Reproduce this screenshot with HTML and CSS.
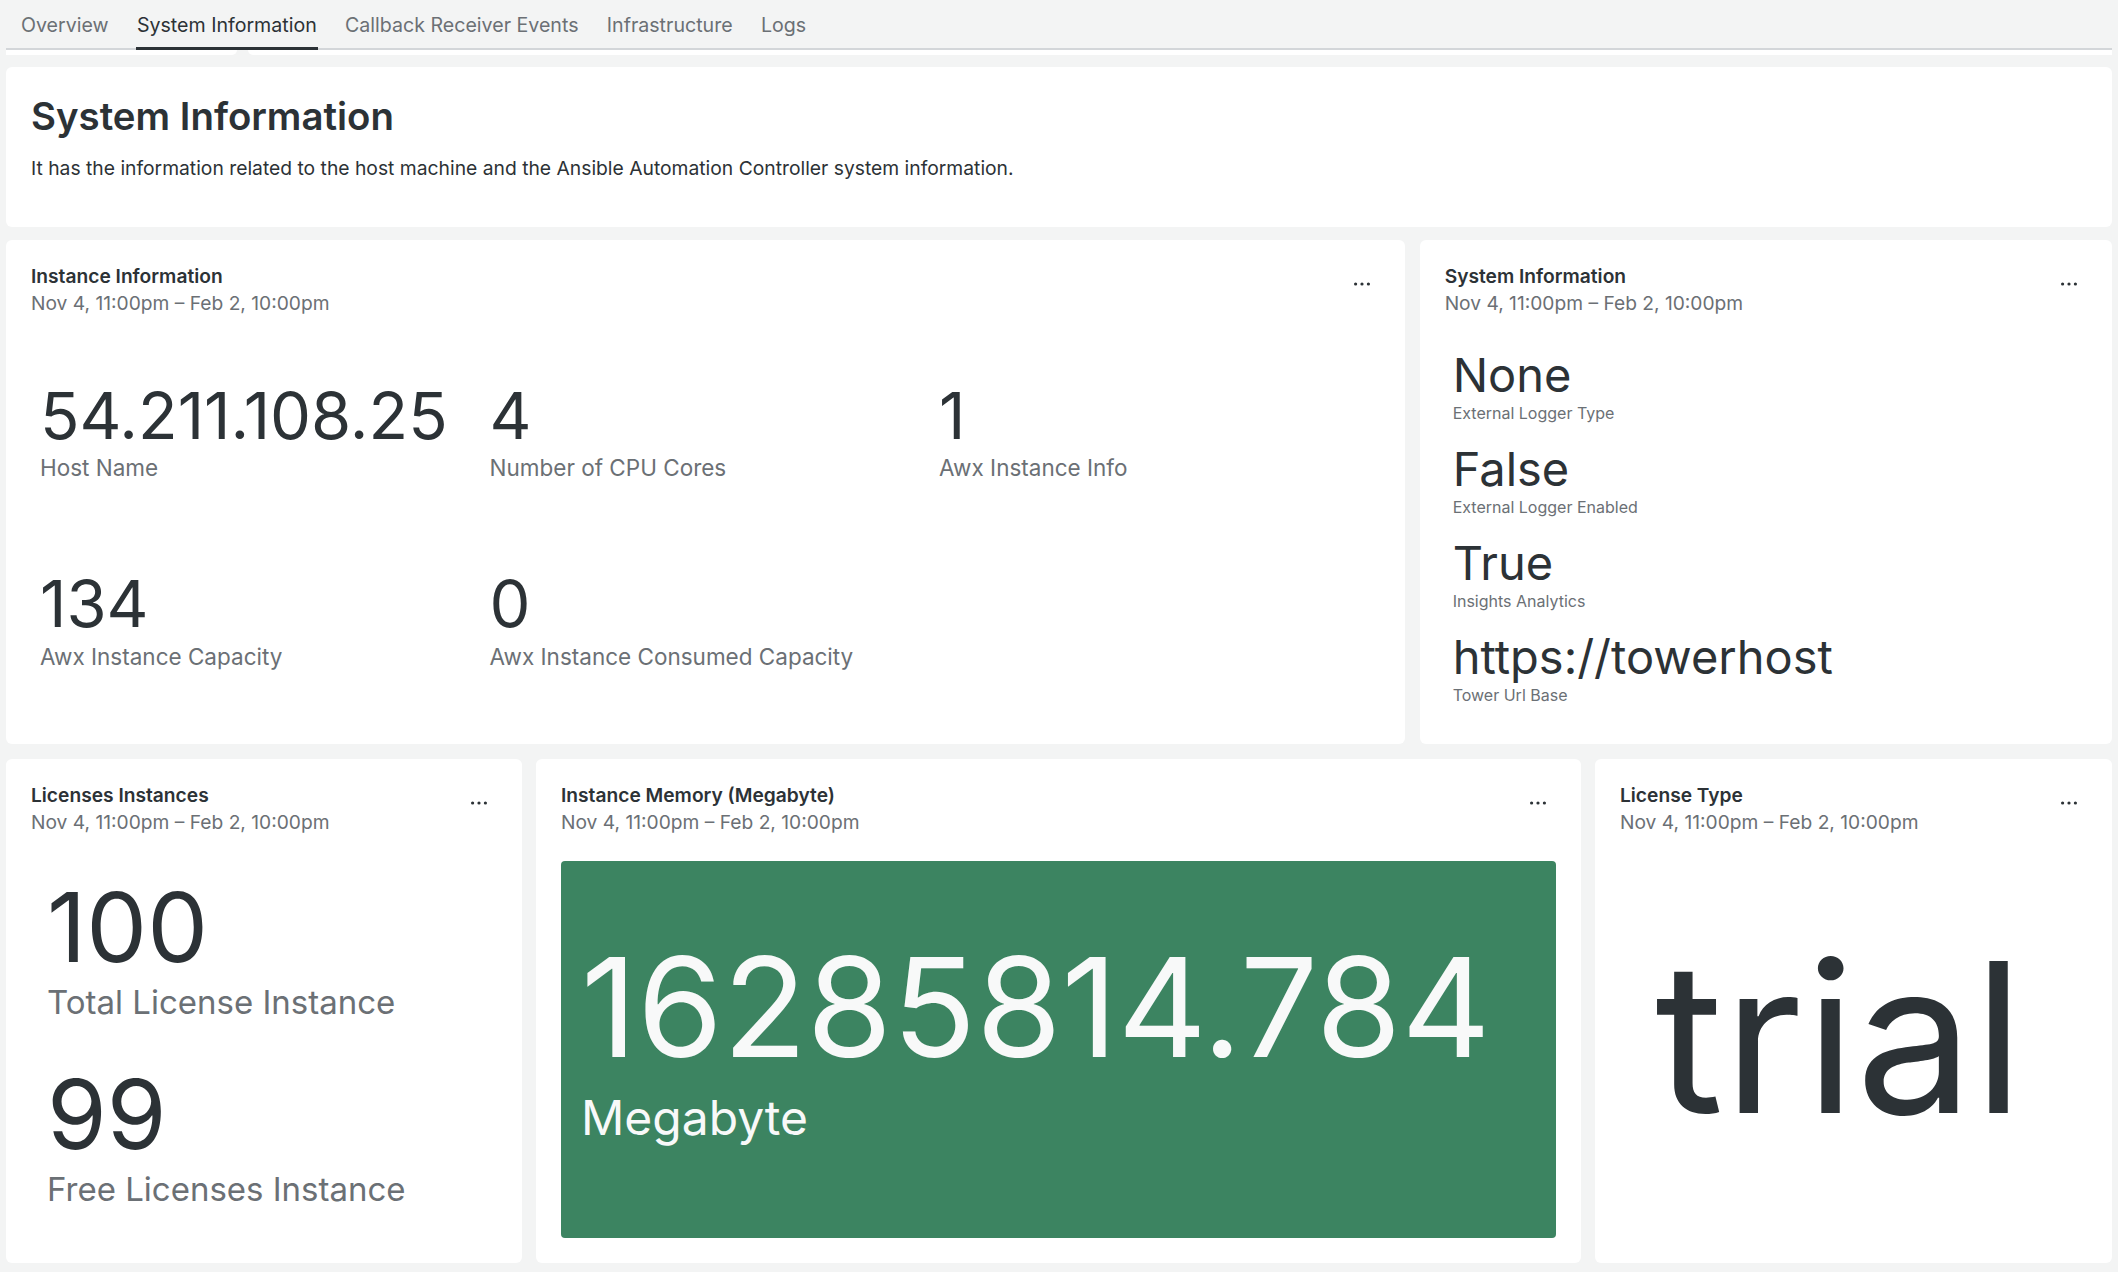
FILE: index.html
```html
<!DOCTYPE html>
<html lang="en">
<head>
<meta charset="utf-8">
<title>System Information</title>
<link rel="stylesheet" href="styles.css">
</head>
<body>
<div class="page">
  <nav class="tabs">
    <a class="tab">Overview</a>
    <a class="tab active">System Information</a>
    <a class="tab">Callback Receiver Events</a>
    <a class="tab">Infrastructure</a>
    <a class="tab">Logs</a>
  </nav>
  <div class="tab-edge"><span class="edge edge-a"></span><span class="edge edge-b"></span></div>

  <section class="card intro">
    <h1 class="intro-title">System Information</h1>
    <p class="intro-text">It has the information related to the host machine and the Ansible Automation Controller system information.</p>
  </section>

  <div class="row row-mid">
    <section class="card">
      <header class="card-head">
        <div class="head-text">
          <div class="card-title">Instance Information</div>
          <div class="card-date">Nov 4, 11:00pm – Feb 2, 10:00pm</div>
        </div>
        <svg class="dots" width="16" height="4" viewBox="0 0 16 4"><circle cx="1.6" cy="2" r="1.6"/><circle cx="8" cy="2" r="1.6"/><circle cx="14.4" cy="2" r="1.6"/></svg>
      </header>
      <div class="stats-grid">
        <div class="stat"><div class="stat-value">54.211.108.25</div><div class="stat-label">Host Name</div></div>
        <div class="stat"><div class="stat-value">4</div><div class="stat-label">Number of CPU Cores</div></div>
        <div class="stat"><div class="stat-value">1</div><div class="stat-label">Awx Instance Info</div></div>
        <div class="stat"><div class="stat-value">134</div><div class="stat-label">Awx Instance Capacity</div></div>
        <div class="stat"><div class="stat-value">0</div><div class="stat-label">Awx Instance Consumed Capacity</div></div>
      </div>
    </section>

    <section class="card">
      <header class="card-head">
        <div class="head-text">
          <div class="card-title">System Information</div>
          <div class="card-date">Nov 4, 11:00pm – Feb 2, 10:00pm</div>
        </div>
        <svg class="dots" width="16" height="4" viewBox="0 0 16 4"><circle cx="1.6" cy="2" r="1.6"/><circle cx="8" cy="2" r="1.6"/><circle cx="14.4" cy="2" r="1.6"/></svg>
      </header>
      <div class="sys-list">
        <div class="sys-item"><div class="sys-value">None</div><div class="sys-label">External Logger Type</div></div>
        <div class="sys-item"><div class="sys-value">False</div><div class="sys-label">External Logger Enabled</div></div>
        <div class="sys-item"><div class="sys-value">True</div><div class="sys-label">Insights Analytics</div></div>
        <div class="sys-item"><div class="sys-value">https://towerhost</div><div class="sys-label">Tower Url Base</div></div>
      </div>
    </section>
  </div>

  <div class="row row-bottom">
    <section class="card">
      <header class="card-head">
        <div class="head-text">
          <div class="card-title">Licenses Instances</div>
          <div class="card-date">Nov 4, 11:00pm – Feb 2, 10:00pm</div>
        </div>
        <svg class="dots" width="16" height="4" viewBox="0 0 16 4"><circle cx="1.6" cy="2" r="1.6"/><circle cx="8" cy="2" r="1.6"/><circle cx="14.4" cy="2" r="1.6"/></svg>
      </header>
      <div class="lic-list">
        <div class="lic-item"><div class="lic-value">100</div><div class="lic-label">Total License Instance</div></div>
        <div class="lic-item"><div class="lic-value">99</div><div class="lic-label">Free Licenses Instance</div></div>
      </div>
    </section>

    <section class="card">
      <header class="card-head">
        <div class="head-text">
          <div class="card-title">Instance Memory (Megabyte)</div>
          <div class="card-date">Nov 4, 11:00pm – Feb 2, 10:00pm</div>
        </div>
        <svg class="dots" width="16" height="4" viewBox="0 0 16 4"><circle cx="1.6" cy="2" r="1.6"/><circle cx="8" cy="2" r="1.6"/><circle cx="14.4" cy="2" r="1.6"/></svg>
      </header>
      <div class="mem-box">
        <div class="mem-value">16285814.784</div>
        <div class="mem-label">Megabyte</div>
      </div>
    </section>

    <section class="card">
      <header class="card-head">
        <div class="head-text">
          <div class="card-title">License Type</div>
          <div class="card-date">Nov 4, 11:00pm – Feb 2, 10:00pm</div>
        </div>
        <svg class="dots" width="16" height="4" viewBox="0 0 16 4"><circle cx="1.6" cy="2" r="1.6"/><circle cx="8" cy="2" r="1.6"/><circle cx="14.4" cy="2" r="1.6"/></svg>
      </header>
      <div class="type-box"><span class="type-value">trial</span></div>
    </section>
  </div>
</div>
</body>
</html>
```

FILE: styles.css
```css
* { box-sizing: border-box; }

html, body {
  margin: 0;
  padding: 0;
  background: #f3f4f4;
}

body {
  font-family: Inter, "Noto Sans", "Liberation Sans", sans-serif;
  color: #2c3236;
}

.page {
  padding: 0 6px 0 6px;
  height: 1272px;
}

/* Tabs */
.tabs {
  display: flex;
  gap: 26.3px;
  height: 50px;
  padding-left: 14px;
  border-bottom: 2px solid #d3d6d9;
}

.tab {
  position: relative;
  display: block;
  padding: 12px 1px 0 1px;
  font-size: 19.6px;
  line-height: 27px;
  color: #6b7075;
  white-space: nowrap;
}

.tab.active {
  color: #2c3236;
}

.tab.active::after {
  content: "";
  position: absolute;
  left: 0;
  right: 0;
  bottom: -2px;
  height: 3px;
  background: #2c3236;
}

.tab-edge {
  display: flex;
  gap: 11px;
  height: 5px;
}

.edge {
  background: #ffffff;
  height: 5px;
}

.edge-a {
  width: 231px;
  border-bottom-right-radius: 5px;
}

.edge-b {
  flex: 1;
  border-bottom-left-radius: 5px;
}

/* Cards */
.card {
  background: #ffffff;
  border-radius: 6px;
  padding: 23px 25px 25px 25px;
  display: flex;
  flex-direction: column;
  min-width: 0;
}

.intro {
  margin-top: 12px;
  height: 160px;
  padding-top: 27px;
}

.intro-title {
  margin: 0;
  font-size: 38.4px;
  line-height: 45.6px;
  font-weight: 600;
  color: #2c3236;
}

.intro-text {
  margin: 15px 0 0 0;
  font-size: 19.3px;
  line-height: 27px;
  color: #2c3236;
}

.row {
  display: grid;
  height: 504px;
}

.row-mid {
  margin-top: 13px;
  grid-template-columns: 1398fr 692fr;
  column-gap: 15px;
}

.row-bottom {
  margin-top: 15px;
  grid-template-columns: 516fr 1045fr 517fr;
  column-gap: 14px;
}

.card-head {
  display: flex;
  justify-content: space-between;
  align-items: flex-start;
}

.card-title {
  font-size: 19.2px;
  line-height: 27px;
  font-weight: 600;
  color: #2c3236;
}

.card-date {
  font-size: 19.2px;
  line-height: 27px;
  color: #6b7075;
}

.dots {
  fill: #2c3236;
  margin-top: 19px;
  margin-right: 10px;
  flex: none;
}

/* Instance information */
.stats-grid {
  display: grid;
  grid-template-columns: repeat(3, 1fr);
  row-gap: 85px;
  padding-top: 64px;
}

.stat {
  padding: 0 9px;
}

.stat-value {
  font-size: 65px;
  line-height: 70.4px;
  color: #2c3236;
}

.stat-label {
  font-size: 22.5px;
  line-height: 33px;
  color: #6b7075;
}

/* System information */
.sys-list {
  display: flex;
  flex-direction: column;
  gap: 19.4px;
  padding: 33px 0 0 8px;
}

.sys-value {
  font-size: 47px;
  line-height: 50.6px;
  color: #2c3236;
}

.sys-label {
  font-size: 16px;
  line-height: 24px;
  color: #6b7075;
}

/* Licenses */
.lic-list {
  display: flex;
  flex-direction: column;
  gap: 38px;
  padding: 39px 0 0 16px;
}

.lic-value {
  font-size: 96.5px;
  line-height: 104.5px;
  color: #2c3236;
}

.lic-label {
  font-size: 33px;
  line-height: 44.8px;
  color: #6b7075;
}

/* Memory */
.mem-box {
  flex: 1;
  margin-top: 25px;
  background: #3c8461;
  border-radius: 4px;
  padding: 71px 20px 0 20px;
  color: #f8f9f9;
}

.mem-value {
  font-size: 138px;
  line-height: 150.7px;
}

.mem-label {
  margin-top: 6px;
  font-size: 48px;
  line-height: 57.6px;
}

/* License type */
.type-box {
  flex: 1;
  display: flex;
  align-items: center;
  justify-content: center;
  padding-right: 28px;
}

.type-value {
  font-size: 209px;
  line-height: 246px;
  color: #2c3236;
}
```
